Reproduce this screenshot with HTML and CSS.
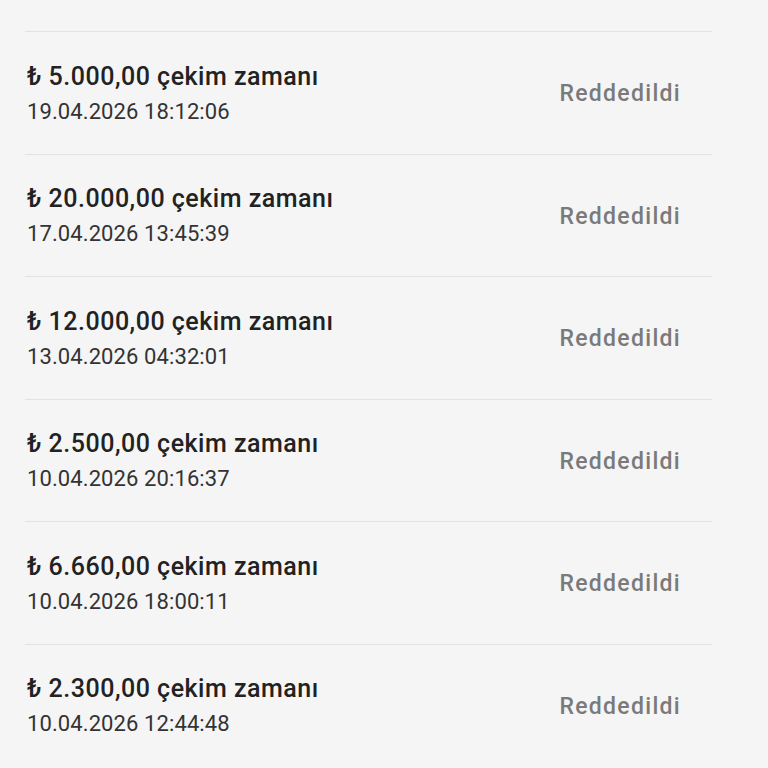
FILE: index.html
```html
<!DOCTYPE html>
<html lang="tr">
<head>
  <meta charset="UTF-8">
  <meta name="viewport" content="width=device-width, initial-scale=1.0">
  <title>Çekim Geçmişi</title>
  <link rel="stylesheet" href="styles.css">
</head>
<body>

  <div class="list">
    <div class="item">
      <div class="info">
        <div class="amount">₺ 5.000,00 çekim zamanı</div>
        <div class="date">19.04.2026 18:12:06</div>
      </div>
      <div class="status">Reddedildi</div>
    </div>
    <div class="item">
      <div class="info">
        <div class="amount">₺ 20.000,00 çekim zamanı</div>
        <div class="date">17.04.2026 13:45:39</div>
      </div>
      <div class="status">Reddedildi</div>
    </div>
    <div class="item">
      <div class="info">
        <div class="amount">₺ 12.000,00 çekim zamanı</div>
        <div class="date">13.04.2026 04:32:01</div>
      </div>
      <div class="status">Reddedildi</div>
    </div>
    <div class="item">
      <div class="info">
        <div class="amount">₺ 2.500,00 çekim zamanı</div>
        <div class="date">10.04.2026 20:16:37</div>
      </div>
      <div class="status">Reddedildi</div>
    </div>
    <div class="item">
      <div class="info">
        <div class="amount">₺ 6.660,00 çekim zamanı</div>
        <div class="date">10.04.2026 18:00:11</div>
      </div>
      <div class="status">Reddedildi</div>
    </div>
    <div class="item">
      <div class="info">
        <div class="amount">₺ 2.300,00 çekim zamanı</div>
        <div class="date">10.04.2026 12:44:48</div>
      </div>
      <div class="status">Reddedildi</div>
    </div>
  </div>

</body>
</html>
```

FILE: styles.css
```css
body { margin: 0; background: #f5f5f5; font-family: Roboto, "Noto Sans", sans-serif; }
.list { margin: 0 56px 0 25px; padding-top: 31px; }
.item { box-sizing: border-box; height: 122.5px; display: flex; align-items: center; justify-content: space-between; padding: 0 31px 0 2px; border-top: 1.5px solid #e2e2e2; }
.info { display: flex; flex-direction: column; gap: 7px; padding-top: 1px; }
.amount { font-size: 25px; font-weight: 500; color: #222; line-height: 30px; letter-spacing: 0.5px; }
.date { font-size: 22px; color: #333; line-height: 26px; letter-spacing: 0.1px; }
.status { font-size: 23px; font-weight: 500; color: #7a7a7a; letter-spacing: 1.3px; padding-top: 2px; }
```
